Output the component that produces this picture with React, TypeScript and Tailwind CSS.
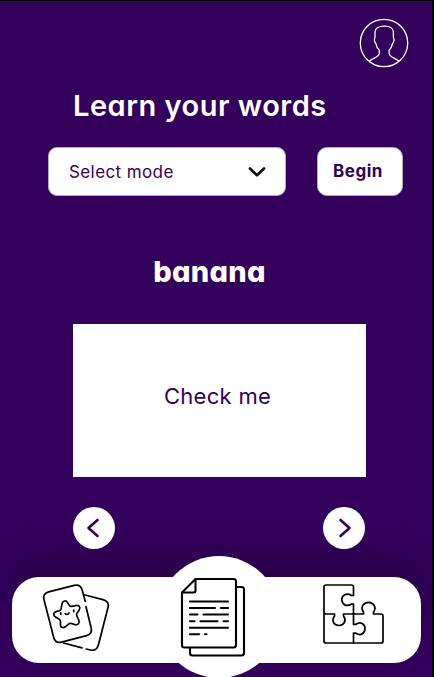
import React from "react";

const stroke = {
  fill: "none",
  stroke: "currentColor",
  strokeLinecap: "round" as const,
  strokeLinejoin: "round" as const,
};

function UserIcon() {
  return (
    <svg className="h-[50px] w-[50px] text-white" viewBox="0 0 50 50" {...stroke} strokeWidth="1.3">
      <circle cx="25" cy="25" r="23.7" />
      <path d="M10.5 43C14 40 20 39.4 20.3 35.3V32.3C17.8 30.2 17.2 27.6 16.7 25.2C15.2 24 15 21 16 19.5V14C16.2 9.6 19 8.1 25.2 8.1S34 9.6 34.4 14V19.5C35.4 21 35.2 24 33.7 25.2C33.2 27.6 32.6 30.2 30.1 32.3V35.3C30.4 39.4 36.4 40 39.8 43" />
    </svg>
  );
}

function CardsIcon() {
  return (
    <svg className="h-[70px] w-[70px] text-black" viewBox="0 0 70 70" {...stroke} strokeWidth="1.7">
      <path d="M45.2 20.3L42.2 9C41 5 38 3.4 34.2 4.4L8.7 10.9C4.8 12 3 14.8 4 18.7L13.7 56.5C14.8 60.5 17.8 62 21.5 61.1L46.6 54.6C50.5 53.5 52.1 50.4 51.1 46.8L46 25.7" />
      <path d="M44.2 13.8L62.8 18.6C67 19.7 69.1 22.2 68 26.5L58.5 63.5C57.4 68.2 54.6 70 50.5 69L46.2 68M42 66.9L23.5 62" />
      <path d="M22.2 22.2C23 19.6 26 19.2 27.4 21.4L29.3 24.4Q30.3 25.7 31.9 25.3L36 24.5C39.2 24 41 26.5 39.2 29L37 32.2Q36.1 33.6 36.9 35L38.8 39C40 42 37.8 44.3 35 43.6L31.4 42.5Q29.8 42.1 28.5 43.2L25.3 45.8C22.9 47.6 20.3 46.2 20.4 43.4L20.5 40.7Q20.5 39 19 38.1L15.5 36C12.9 34.3 13.2 31.4 16.1 30.6L19.2 29.8Q20.7 29.3 21 27.8Z" />
      <path d="M20.8 31.8V33.2M33.7 29.2V30.6M25.2 32.4C26.3 33.9 28.5 33.5 29 31.9" />
    </svg>
  );
}

function DocumentsIcon() {
  return (
    <svg className="h-[82px] w-[66px] text-black" viewBox="0 0 66 82" {...stroke} strokeWidth="2.1">
      <path d="M15.5 2H53.5Q56 2 56 4.5V68Q56 70.5 53.5 70.5H4.5Q2 70.5 2 68V15.5Z" />
      <path d="M15.5 2V13.5Q15.5 15.5 13.5 15.5H2" />
      <path d="M56.5 10H61.5Q64 10 64 12.5V76Q64 78.5 61.5 78.5H12.5Q10 78.5 10 76V71" />
      <path d="M10 24.5H48M10 31H35M41 31H48M10 37.5H17.5M23.5 37.5H48M10 44.2H14.5M20.5 44.2H37.5M43.5 44.2H48M10 50.7H48M10 57.3H19M25 57.3H26.5" />
    </svg>
  );
}

function PuzzleIcon() {
  return (
    <svg className="h-[62px] w-[62px] text-black" viewBox="0 0 62 62" {...stroke} strokeWidth="1.7">
      <path d="M30.5 11.5V3Q30.5 1 28.5 1H3Q1 1 1 3V28Q1 30 3 30H11.5V32C8 37 11 41.5 16 41.5S24 36.5 20.5 32V30H30.5V20H28.5C23 23.5 18.8 19.8 18.8 15.6S23.5 8.5 28.5 11.5Z" />
      <path d="M1 30V57Q1 59 3 59H30.5V49.2H33C38 52.5 42 49 42 44.5S37.5 37 33 40.3H30.5V30" />
      <path d="M30.5 30H40.5V28C37 23.3 40.5 18.3 45.5 18.3S54 23.5 50.5 28V30H58Q60 30 60 32V57Q60 59 58 59H30.5" />
    </svg>
  );
}

export default function App() {
  return (
    <main className="relative flex h-[677px] w-[434px] flex-col overflow-hidden border-t border-r-2 border-black bg-[#33005c] font-['Inter','Noto_Sans',sans-serif] text-[#33005c] [font-feature-settings:'cv11']">
      <header className="flex h-[82px] justify-end pt-[17px] pr-[23px]">
        <button aria-label="Profile" className="h-[50px]"><UserIcon /></button>
      </header>

      <h1 className="ml-[73px] h-[64px] whitespace-nowrap text-[29px] leading-[45px] font-semibold tracking-[0.5px] text-white">Learn your words</h1>

      <section className="ml-[48px] flex gap-[31px]">
        <button className="flex h-[49px] w-[238px] items-center justify-between rounded-[9px] border border-[#b5adba] bg-white pr-[18px] pl-5 text-[17px]">
          <span className="pt-[2px] whitespace-nowrap tracking-[0.4px]">Select mode</span>
          <svg className="h-5 w-5 text-[#111]" viewBox="0 0 20 20" {...stroke} strokeWidth="2.7"><path d="M3 6.5L10 13.3L17 6.5" /></svg>
        </button>
        <button className="h-[49px] w-[86px] rounded-[10px] border border-[#b5adba] bg-white pr-1 text-[17px] font-bold tracking-[0.5px]">Begin</button>
      </section>

      <section className="mt-[56px] ml-[73px] w-[293px]">
        <h2 className="pr-[20px] text-center text-[29px] leading-[40px] font-extrabold tracking-[0.3px] text-white">banana</h2>
        <button className="mt-[32px] flex h-[153px] w-full items-center justify-center bg-white pr-[4px] pb-[9px] text-[22px] tracking-[0.3px]">Check me</button>
      </section>

      <nav className="absolute top-[576px] left-[12px] flex h-[86px] w-[409px] items-start rounded-[27px] bg-white shadow-[0_-20px_36px_rgba(0,0,0,0.22)]">
        <a className="mt-[4px] ml-[28px] block h-[70px]"><CardsIcon /></a>
        <a className="-mt-[21px] ml-[48px] flex h-[122px] w-[122px] shrink-0 items-center justify-center rounded-full bg-white pt-[2px] pr-[12px]"><DocumentsIcon /></a>
        <a className="mt-[7px] ml-[43px] block h-[62px]"><PuzzleIcon /></a>
      </nav>

      <div className="relative mt-[30px] ml-[73px] flex w-[292px] justify-between">
        <button aria-label="Previous word" className="flex size-[42px] items-center justify-center rounded-full bg-white">
          <svg className="size-6" viewBox="0 0 24 24" {...stroke} strokeWidth="2.6"><path d="M15.5 4L6.5 12L15.5 20" /></svg>
        </button>
        <button aria-label="Next word" className="flex size-[42px] items-center justify-center rounded-full bg-white">
          <svg className="size-6" viewBox="0 0 24 24" {...stroke} strokeWidth="2.6"><path d="M8.5 4L17.5 12L8.5 20" /></svg>
        </button>
      </div>
    </main>
  );
}
